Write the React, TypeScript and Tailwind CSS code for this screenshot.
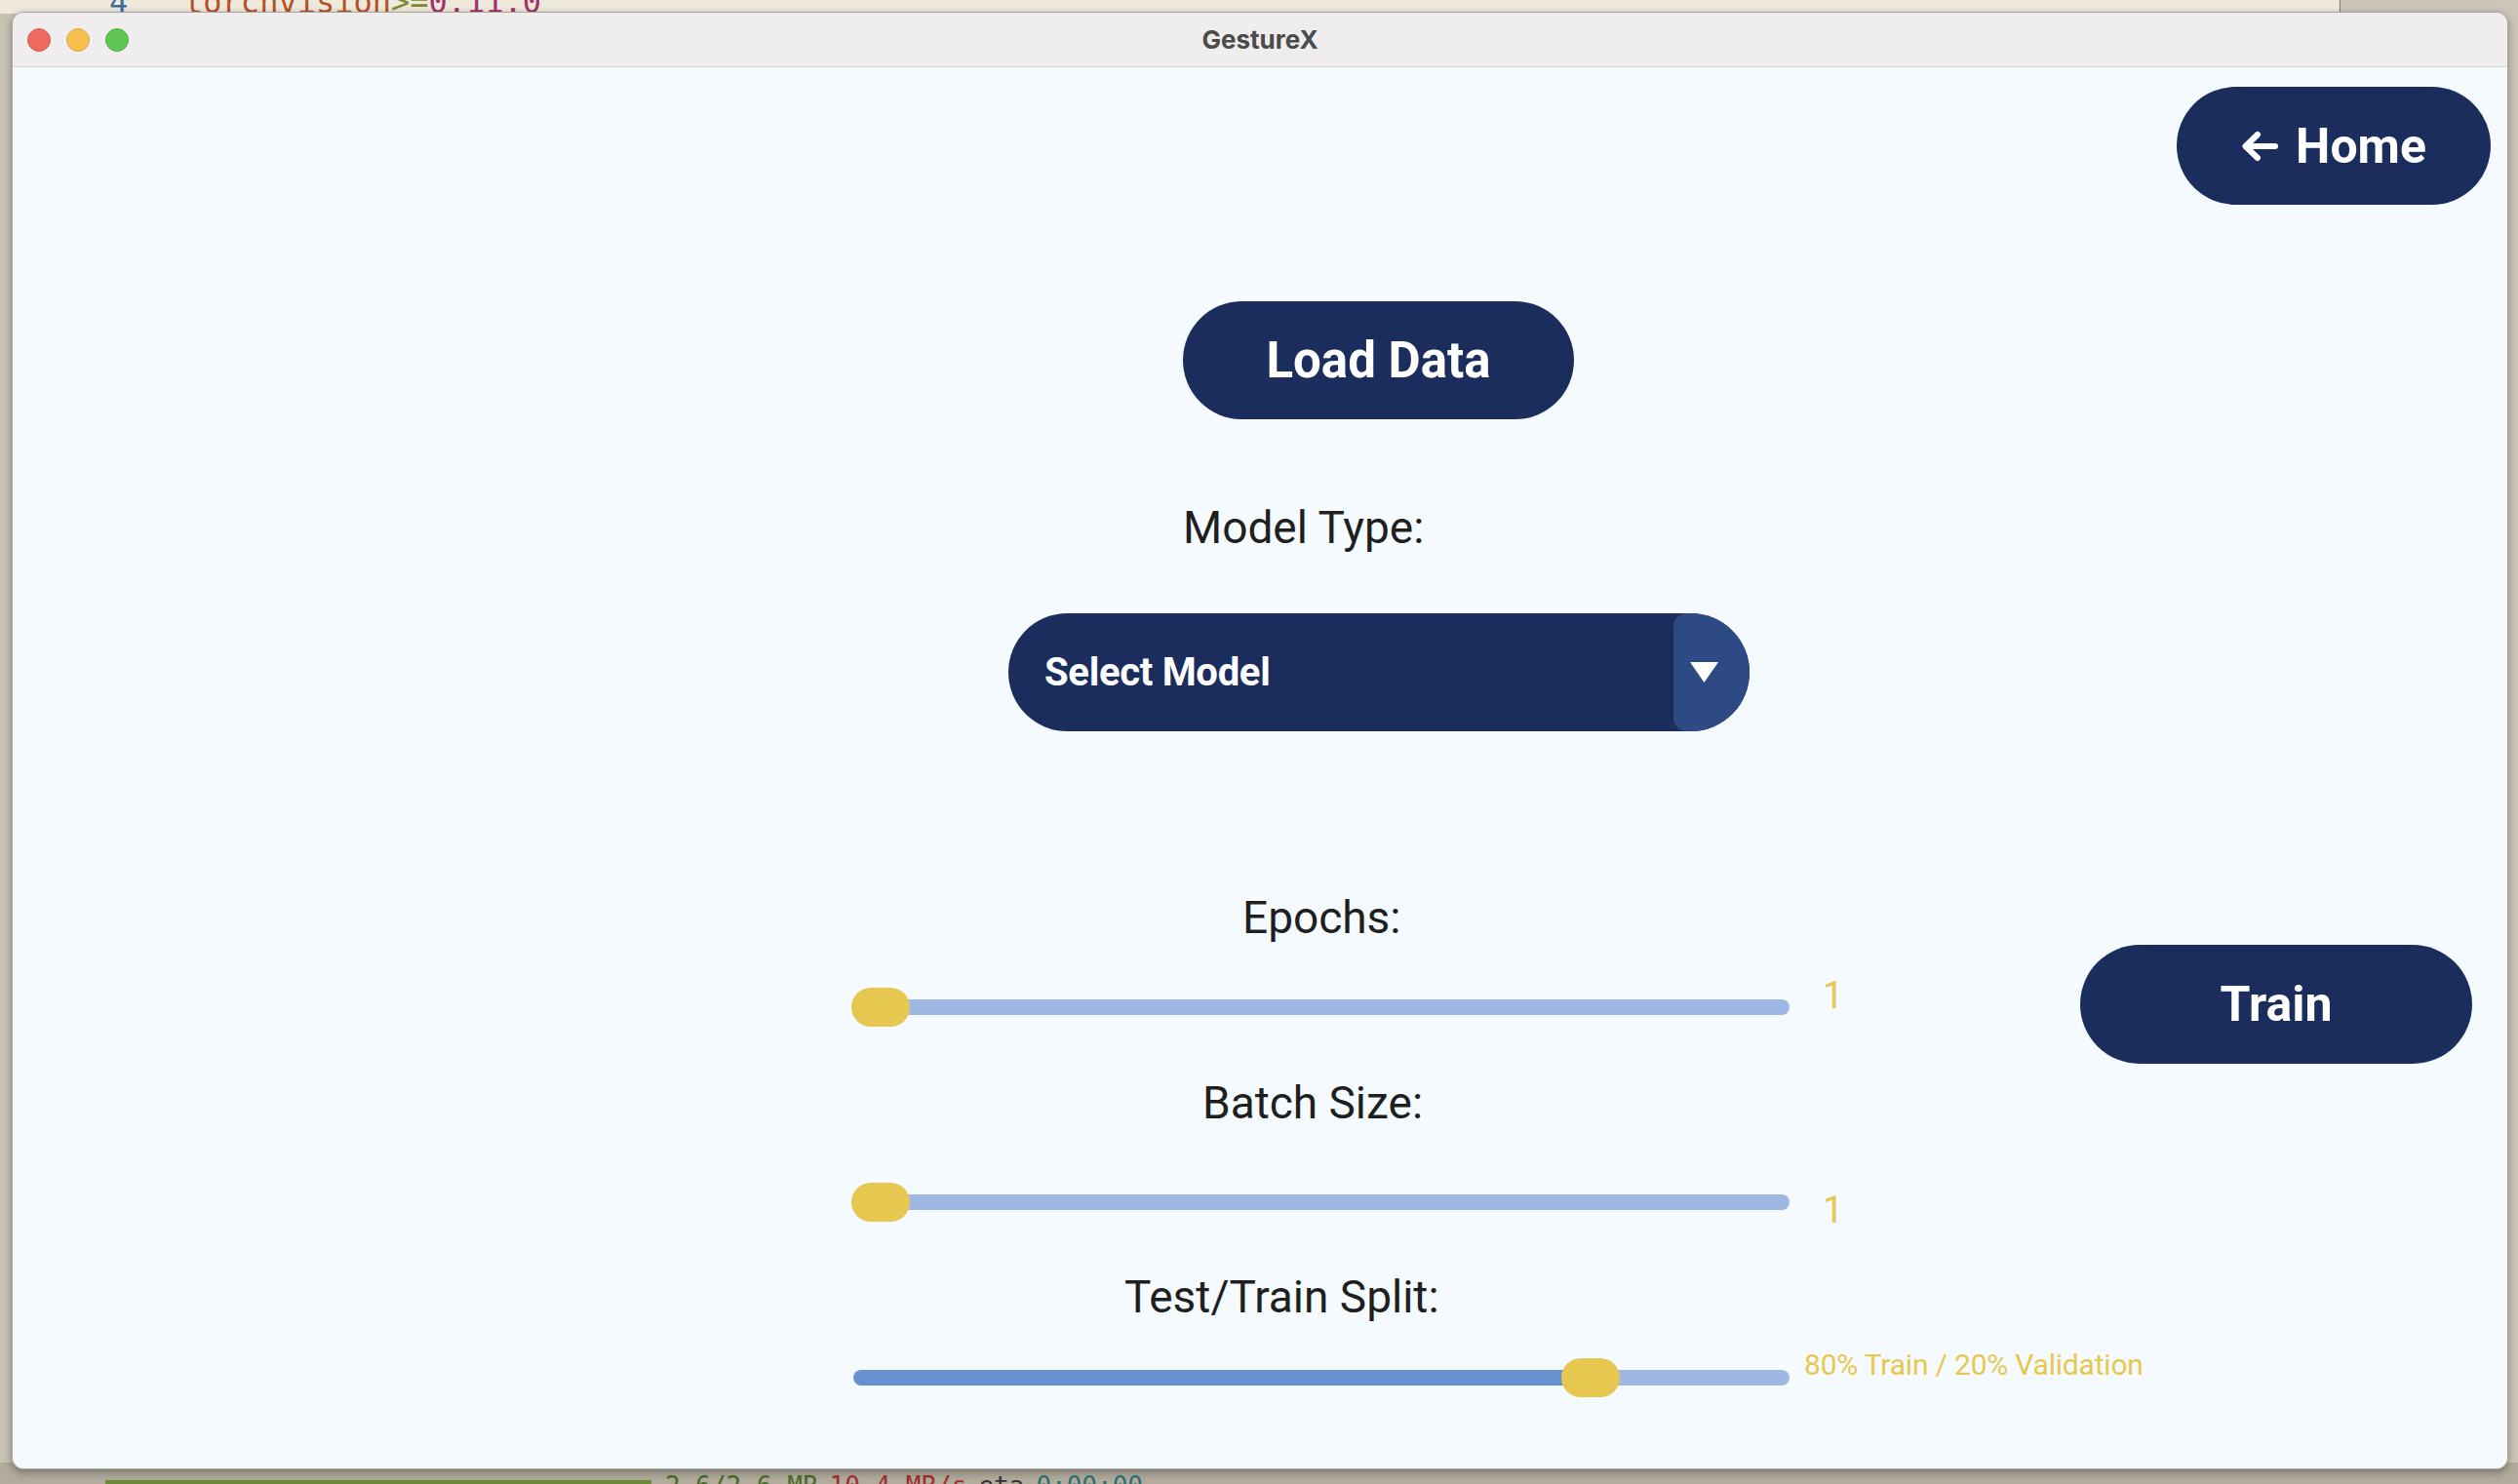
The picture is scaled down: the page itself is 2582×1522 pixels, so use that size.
import React from "react";

const roboto = "font-[family-name:Roboto,sans-serif]";

function Slider({ thumbLeft, fill }: { thumbLeft: number; fill?: number }) {
  return (
    <div className="relative w-[962px] h-[40px] flex items-center shrink-0">
      <div className="ml-[2px] w-[960px] h-[16px] rounded-full bg-[#9db8e2] overflow-hidden flex">
        {fill ? <div className="h-full rounded-full bg-[#6690d0]" style={{ width: fill }} /> : null}
      </div>
      <div
        className="absolute top-0 w-[60px] h-[40px] rounded-full bg-[#e6c850]"
        style={{ left: thumbLeft }}
      />
    </div>
  );
}

function Label({ children, ml, mt }: { children: React.ReactNode; ml: string; mt: string }) {
  return (
    <div className={`${ml} ${mt} ${roboto} text-[46px] leading-none text-[#1f1f1f] whitespace-nowrap`}>
      {children}
    </div>
  );
}

function Window() {
  return (
    <div className="w-[2560px] h-[1495px] rounded-[12px] overflow-hidden flex flex-col border border-[#a8a49b] shadow-[0_3px_8px_rgba(0,0,0,0.35)]">
      {/* title bar */}
      <div className="h-[56px] shrink-0 grid grid-cols-[1fr_auto_1fr] items-center bg-[#efedee] border-b border-[#d2d2d4]">
        <div className="flex items-center gap-[16px] pl-[15px]">
          <div className="w-[24px] h-[24px] rounded-full bg-[#ee6a5f] border border-[#d55a4f]" />
          <div className="w-[24px] h-[24px] rounded-full bg-[#f5bf4f] border border-[#d9a53c]" />
          <div className="w-[24px] h-[24px] rounded-full bg-[#61c554] border border-[#4fab43]" />
        </div>
        <div className="font-[family-name:Inter,sans-serif] font-bold text-[26px] leading-none text-[#4b4b4b]">
          GestureX
        </div>
        <div />
      </div>

      {/* content */}
      <div className="flex-1 flex flex-col bg-[#f5fafe]">
        <div className="flex justify-end pt-[20px] pr-[17px]">
          <button className={`w-[322px] h-[121px] rounded-full bg-[#1b2d5c] text-white flex items-center justify-center gap-[18px] ${roboto} font-bold text-[50px] leading-none`}>
            <svg width="38" height="32" viewBox="0 0 38 32" fill="none">
              <path d="M35 16H5" stroke="white" strokeWidth="6" strokeLinecap="round" />
              <path d="M17 4L4.5 16L17 28" stroke="white" strokeWidth="6" strokeLinecap="round" strokeLinejoin="round" />
            </svg>
            <span>Home</span>
          </button>
        </div>

        <button className={`mt-[99px] ml-[1200px] w-[401px] h-[121px] rounded-full bg-[#1b2d5c] text-white flex items-center justify-center ${roboto} font-bold text-[51px] leading-none`}>
          Load Data
        </button>

        <Label ml="ml-[1200px]" mt="mt-[88px]">Model Type:</Label>

        <div className="mt-[65px] ml-[1021px] w-[760px] h-[121px] rounded-full bg-[#1b2d5c] flex items-center overflow-hidden">
          <span className={`flex-1 pl-[37px] text-white ${roboto} font-bold text-[40px] tracking-[-0.3px] leading-none`}>
            Select Model
          </span>
          <div className="w-[78px] h-full bg-[#2e4a85] rounded-l-[14px] flex items-center pl-[17px]">
            <svg width="29" height="21" viewBox="0 0 29 21">
              <path d="M0 0H29L14.5 21Z" fill="white" />
            </svg>
          </div>
        </div>

        <Label ml="ml-[1261px]" mt="mt-[168px]">Epochs:</Label>

        <div className="mt-[5px] ml-[860px] flex items-center">
          <Slider thumbLeft={0} />
          <div className={`ml-[34px] mb-[24px] w-[60px] ${roboto} text-[38px] leading-none text-[#e6c850]`}>1</div>
          <button className={`ml-[204px] mb-[6px] w-[402px] h-[122px] rounded-full bg-[#1b2d5c] text-white flex items-center justify-center ${roboto} font-bold text-[50px] leading-none`}>
            Train
          </button>
        </div>

        <Label ml="ml-[1220px]" mt="mt-[11px]">Batch Size:</Label>

        <div className="mt-[59px] ml-[860px] flex items-start">
          <Slider thumbLeft={0} />
          <div className={`ml-[34px] mt-[9px] w-[60px] ${roboto} text-[38px] leading-none text-[#e6c850]`}>1</div>
        </div>

        <Label ml="ml-[1140px]" mt="mt-[47px]">Test/Train Split:</Label>

        <div className="mt-[40px] ml-[860px] flex items-start">
          <Slider thumbLeft={728} fill={756} />
          <div className={`ml-[15px] -mt-[8px] ${roboto} text-[30px] tracking-[-0.2px] leading-none text-[#e6c850] whitespace-nowrap`}>
            80% Train / 20% Validation
          </div>
        </div>
      </div>
    </div>
  );
}

export default function App() {
  return (
    <div className="relative w-[2582px] h-[1522px] overflow-hidden bg-[#c7c2b3]">
      {/* desktop behind the window */}
      <div className="absolute left-0 top-0 w-full h-[14px] bg-[#efe9dc] overflow-hidden">
        <div className="absolute left-[112px] -top-[14px] flex font-[family-name:'DejaVu_Sans_Mono',monospace] text-[32px] leading-none whitespace-pre">
          <span className="text-[#3d6f9e]">4   </span>
          <span className="text-[#b4512b]">torchvision</span>
          <span className="text-[#7b8a2a]">&gt;=</span>
          <span className="text-[#a3306a]">0.11.0</span>
        </div>
        <div className="absolute left-[2396px] -top-[14px] font-[family-name:'DejaVu_Sans_Mono',monospace] text-[32px] leading-none text-[#3f8a80] whitespace-pre">
          project-de
        </div>
      </div>
      <div className="absolute left-[2400px] top-[0px] w-[182px] h-[1522px] bg-[#cbc6b8]" />
      <div className="absolute left-0 top-[1500px] w-full h-[22px] bg-[#b2ac9d] overflow-hidden">
        <div className="absolute left-[108px] top-[18px] w-[560px] h-[4px] bg-[#6a8a3a]" />
        <div className="absolute left-[682px] top-[11px] flex gap-[12px] font-[family-name:'DejaVu_Sans_Mono',monospace] text-[26px] leading-none whitespace-pre">
          <span className="text-[#4a6a2a]">2.6/2.6 MB</span>
          <span className="text-[#a03030]">10.4 MB/s</span>
          <span className="text-[#333333]">eta</span>
          <span className="text-[#2f6f70]">0:00:00</span>
        </div>
      </div>

      <div className="relative pt-[12px] pl-[12px]">
        <Window />
      </div>
    </div>
  );
}
